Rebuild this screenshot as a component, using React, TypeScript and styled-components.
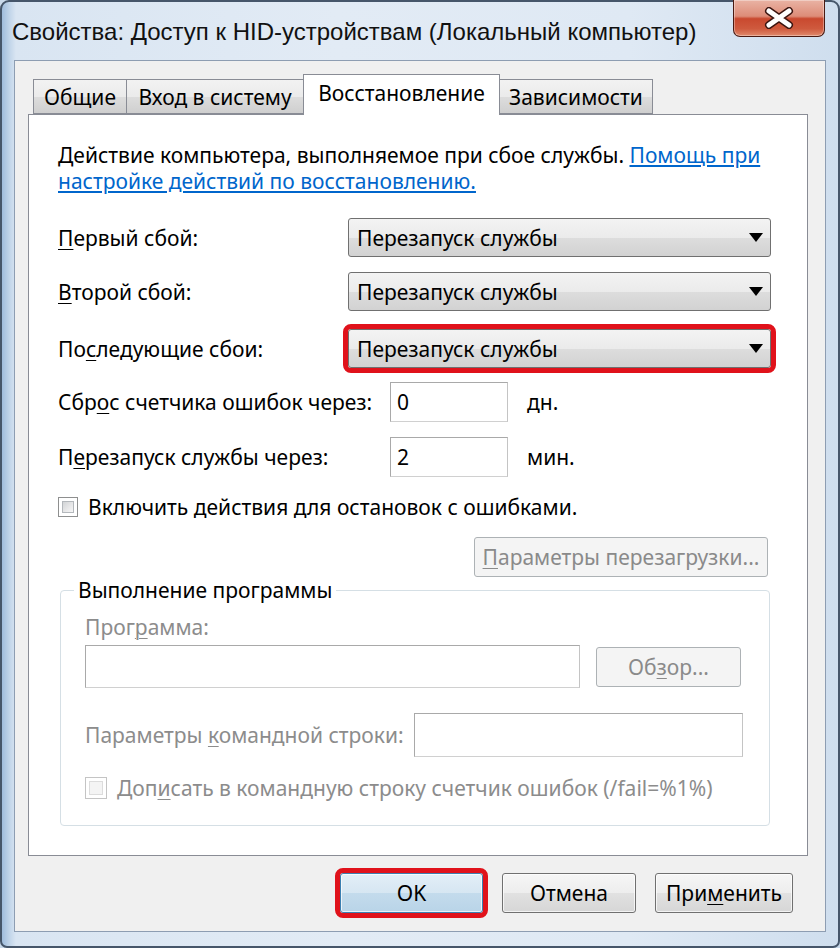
import React from 'react';
import styled, { createGlobalStyle } from 'styled-components';

const FONT = `'Noto Sans', 'DejaVu Sans', sans-serif`;
const SIZE = '21px';

const GlobalStyle = createGlobalStyle`
  html, body {
    margin: 0;
    padding: 0;
  }
  body {
    width: 840px;
    height: 948px;
    overflow: hidden;
    background: #c9d9ea;
    font-family: ${FONT};
  }
`;

const Window = styled.div`
  box-sizing: border-box;
  width: 840px;
  height: 948px;
  display: flex;
  flex-direction: column;
  border: 2px solid #46566a;
  border-radius: 9px 9px 7px 7px;
  background: linear-gradient(
    90deg,
    #9fbcdc 0,
    #c3d6ea 8px,
    #d9e5f2 14px,
    #e2ebf5 40%,
    #dfe9f4 75%,
    #cfdeee 100%
  );
`;

const TitleBar = styled.div`
  height: 58px;
  display: flex;
  justify-content: space-between;
  align-items: flex-start;
  padding-left: 10px;
`;

const Title = styled.div`
  margin-top: 15px;
  font-family: 'Liberation Sans', Arial, sans-serif;
  font-size: 24px;
  line-height: 30px;
  color: #111;
`;

const CloseButton = styled.div`
  box-sizing: border-box;
  width: 92px;
  height: 37px;
  margin-right: 13px;
  margin-top: -2px;
  display: flex;
  align-items: center;
  justify-content: center;
  border: 1px solid #4a1a12;
  border-top: none;
  border-radius: 0 0 7px 7px;
  background: linear-gradient(
    180deg,
    #e9b3a4 0%,
    #dd8c78 45%,
    #c9492f 52%,
    #cf5a3e 80%,
    #e08a6c 100%
  );
  box-shadow: inset 0 0 0 1px rgba(255, 255, 255, 0.35);
`;

const Client = styled.div`
  flex: 1;
  box-sizing: border-box;
  margin: 0 12px 14px 12px;
  display: flex;
  flex-direction: column;
  padding: 13px 17px 0 13px;
  background: #f0f0f0;
  border: 1px solid #8d9db2;
`;

const TabStrip = styled.div`
  display: flex;
  align-items: flex-end;
  height: 41px;
  padding-left: 5px;
  margin-bottom: -1px;
  position: relative;
  z-index: 1;
`;

const Tab = styled.div<{ $active?: boolean; $w: number }>`
  box-sizing: border-box;
  width: ${({ $w }) => $w}px;
  height: ${({ $active }) => ($active ? 41 : 35)}px;
  margin-bottom: ${({ $active }) => ($active ? 0 : 1)}px;
  display: flex;
  align-items: center;
  justify-content: center;
  padding-bottom: ${({ $active }) => ($active ? 4 : 0)}px;
  border: 1px solid #898c95;
  border-bottom: ${({ $active }) => ($active ? 'none' : '1px solid #898c95')};
  background: ${({ $active }) =>
    $active
      ? '#ffffff'
      : 'linear-gradient(180deg, #f2f2f2 0%, #ebebeb 50%, #dddddd 51%, #cfcfcf 100%)'};
  font-size: ${SIZE};
  white-space: nowrap;
  color: #000;
  & + & {
    margin-left: -1px;
  }
`;

const Panel = styled.div`
  flex: 1;
  box-sizing: border-box;
  display: flex;
  flex-direction: column;
  padding: 27px 36px 0 29px;
  background: #ffffff;
  border: 1px solid #898c95;
`;

const Description = styled.p`
  margin: 0;
  font-size: ${SIZE};
  line-height: 26px;
  white-space: nowrap;
  color: #000;
`;

const HelpLink = styled.a`
  color: #0066cc;
  text-decoration: underline;
`;

const Row = styled.div<{ $top: number }>`
  display: flex;
  align-items: center;
  margin-top: ${({ $top }) => $top}px;
`;

const Label = styled.span<{ $w?: number; $disabled?: boolean }>`
  ${({ $w }) => ($w ? `width: ${$w}px; flex-shrink: 0;` : '')}
  font-size: ${SIZE};
  line-height: 26px;
  color: ${({ $disabled }) => ($disabled ? '#8c8c8c' : '#000')};
  white-space: nowrap;
`;

const Combo = styled.div<{ $highlight?: boolean }>`
  box-sizing: border-box;
  width: 423px;
  height: 39px;
  display: flex;
  align-items: center;
  justify-content: space-between;
  padding: 0 6px 0 8px;
  border: 1px solid #707070;
  border-radius: 3px;
  background: linear-gradient(180deg, #f3f3f3 0%, #ebebeb 50%, #dddddd 51%, #d2d2d2 100%);
  font-size: ${SIZE};
  white-space: nowrap;
  color: #000;
  outline: ${({ $highlight }) => ($highlight ? '5px solid #e0121b' : 'none')};
`;

const Arrow = styled.span`
  width: 0;
  height: 0;
  border-left: 7px solid transparent;
  border-right: 7px solid transparent;
  border-top: 9px solid #000;
  margin-right: 1px;
`;

const TextBox = styled.input<{ $w: number; $h: number }>`
  box-sizing: border-box;
  width: ${({ $w }) => $w}px;
  height: ${({ $h }) => $h}px;
  flex-shrink: 0;
  padding: 0 6px;
  border: 1px solid #a9a9a9;
  border-bottom-color: #d0d0d0;
  border-right-color: #c4c4c4;
  background: #ffffff;
  font-family: ${FONT};
  font-size: ${SIZE};
  color: #000;
  outline: none;
`;

const Unit = styled.span`
  margin-left: 19px;
  font-size: ${SIZE};
  color: #000;
`;

const Check = styled.span<{ $size: number; $disabled?: boolean }>`
  box-sizing: border-box;
  width: ${({ $size }) => $size}px;
  height: ${({ $size }) => $size}px;
  flex-shrink: 0;
  padding: 3px;
  border: 1px solid ${({ $disabled }) => ($disabled ? '#c4c4c4' : '#8e8f8f')};
  background: #fff;
  display: flex;
  &::after {
    content: '';
    flex: 1;
    border: 1px solid ${({ $disabled }) => ($disabled ? '#dcdcdc' : '#b4b8bc')};
    background: ${({ $disabled }) =>
      $disabled
        ? '#f4f4f4'
        : 'linear-gradient(135deg, #d2d4d6 0%, #e9e9ea 60%, #f6f6f6 100%)'};
  }
`;

const CheckLabel = styled.span<{ $gap: number; $disabled?: boolean }>`
  margin-left: ${({ $gap }) => $gap}px;
  font-size: ${SIZE};
  line-height: 26px;
  color: ${({ $disabled }) => ($disabled ? '#8c8c8c' : '#000')};
  white-space: nowrap;
`;

const Button = styled.div<{ $w: number; $disabled?: boolean; $default?: boolean; $highlight?: boolean }>`
  box-sizing: border-box;
  width: ${({ $w }) => $w}px;
  height: 40px;
  flex-shrink: 0;
  display: flex;
  align-items: center;
  justify-content: center;
  border-radius: 3px;
  font-size: ${SIZE};
  white-space: nowrap;
  border: 1px solid
    ${({ $disabled, $default }) => ($disabled ? '#adb2b5' : $default ? '#3c7fb1' : '#707070')};
  color: ${({ $disabled }) => ($disabled ? '#8a8a8a' : '#000')};
  background: ${({ $disabled, $default }) =>
    $disabled
      ? '#f4f4f4'
      : $default
      ? 'linear-gradient(180deg, #e3eef7 0%, #d6e6f2 50%, #c3dbec 51%, #b9d4e8 100%)'
      : 'linear-gradient(180deg, #f6f6f6 0%, #ededed 50%, #e1e1e1 51%, #d6d6d6 100%)'};
  box-shadow: ${({ $disabled }) => ($disabled ? 'none' : 'inset 0 0 0 1px rgba(255,255,255,0.7)')};
  outline: ${({ $highlight }) => ($highlight ? '5px solid #e0121b' : 'none')};
`;

const ParamsButton = styled(Button)`
  align-self: flex-end;
  margin-top: 17px;
  margin-right: 3px;
`;

const BrowseButton = styled(Button)`
  margin-left: 16px;
`;

const Group = styled.fieldset`
  margin: 0 1px 0 2px;
  padding: 0 26px 24px 24px;
  border: 1px solid #d5dfe5;
  border-radius: 4px;
  display: flex;
  flex-direction: column;
`;

const Legend = styled.legend`
  margin-left: -11px;
  padding: 0 4px;
  font-size: ${SIZE};
  line-height: 26px;
  color: #000;
`;

const SpaceRow = styled(Row)`
  justify-content: space-between;
`;

const ButtonRow = styled.div`
  height: 75px;
  flex-shrink: 0;
  box-sizing: border-box;
  display: flex;
  justify-content: flex-end;
  align-items: flex-start;
  gap: 19px;
  padding: 17px 15px 0 0;
`;

const Key = styled.u`
  text-decoration-thickness: 1px;
  text-underline-offset: 3px;
`;

export default function App() {
  return (
    <>
      <GlobalStyle />
      <Window>
        <TitleBar>
          <Title>Свойства: Доступ к HID-устройствам (Локальный компьютер)</Title>
          <CloseButton>
            <svg width="32" height="22" viewBox="0 0 32 22">
              <path d="M6 4 L26 18 M26 4 L6 18" stroke="#3b1510" strokeWidth="8" strokeLinecap="round" />
              <path d="M6 4 L26 18 M26 4 L6 18" stroke="#ffffff" strokeWidth="5" strokeLinecap="round" />
            </svg>
          </CloseButton>
        </TitleBar>
        <Client>
          <TabStrip>
            <Tab $w={94}>Общие</Tab>
            <Tab $w={178}>Вход в систему</Tab>
            <Tab $w={197} $active>
              Восстановление
            </Tab>
            <Tab $w={154}>Зависимости</Tab>
          </TabStrip>
          <Panel>
            <Description>
              Действие компьютера, выполняемое при сбое службы.{' '}
              <HelpLink>
                Помощь при
                <br />
                настройке действий по восстановлению.
              </HelpLink>
            </Description>

            <Row $top={24}>
              <Label $w={290}>
                <Key>П</Key>ервый сбой:
              </Label>
              <Combo>
                Перезапуск службы
                <Arrow />
              </Combo>
            </Row>
            <Row $top={15}>
              <Label $w={290}>
                <Key>В</Key>торой сбой:
              </Label>
              <Combo>
                Перезапуск службы
                <Arrow />
              </Combo>
            </Row>
            <Row $top={18}>
              <Label $w={290}>
                По<Key>с</Key>ледующие сбои:
              </Label>
              <Combo $highlight>
                Перезапуск службы
                <Arrow />
              </Combo>
            </Row>

            <Row $top={14}>
              <Label $w={332}>
                Сбр<Key>о</Key>с счетчика ошибок через:
              </Label>
              <TextBox $w={118} $h={40} defaultValue="0" />
              <Unit>дн.</Unit>
            </Row>
            <Row $top={15}>
              <Label $w={332}>
                П<Key>е</Key>резапуск службы через:
              </Label>
              <TextBox $w={118} $h={40} defaultValue="2" />
              <Unit>мин.</Unit>
            </Row>

            <Row $top={17}>
              <Check $size={20} />
              <CheckLabel $gap={10}>Включить действия для остановок с ошибками.</CheckLabel>
            </Row>

            <ParamsButton $w={294} $disabled>
              <span>
                <Key>П</Key>араметры перезагрузки...
              </span>
            </ParamsButton>

            <Group>
              <Legend>Выполнение программы</Legend>
              <Row $top={11}>
                <Label $disabled>
                  Прог<Key>р</Key>амма:
                </Label>
              </Row>
              <Row $top={5}>
                <TextBox $w={495} $h={43} disabled />
                <BrowseButton $w={145} $disabled>
                  <span>
                    Об<Key>з</Key>ор...
                  </span>
                </BrowseButton>
              </Row>
              <SpaceRow $top={25}>
                <Label $disabled>
                  Параметры <Key>к</Key>омандной строки:
                </Label>
                <TextBox $w={329} $h={44} disabled />
              </SpaceRow>
              <Row $top={18}>
                <Check $size={22} $disabled />
                <CheckLabel $gap={10} $disabled>
                  Доп<Key>и</Key>сать в командную строку счетчик ошибок (/fail=%1%)
                </CheckLabel>
              </Row>
            </Group>
          </Panel>
          <ButtonRow>
            <Button $w={143} $default $highlight>
              OK
            </Button>
            <Button $w={134}>Отмена</Button>
            <Button $w={138}>
              <span>
                При<Key>м</Key>енить
              </span>
            </Button>
          </ButtonRow>
        </Client>
      </Window>
    </>
  );
}
